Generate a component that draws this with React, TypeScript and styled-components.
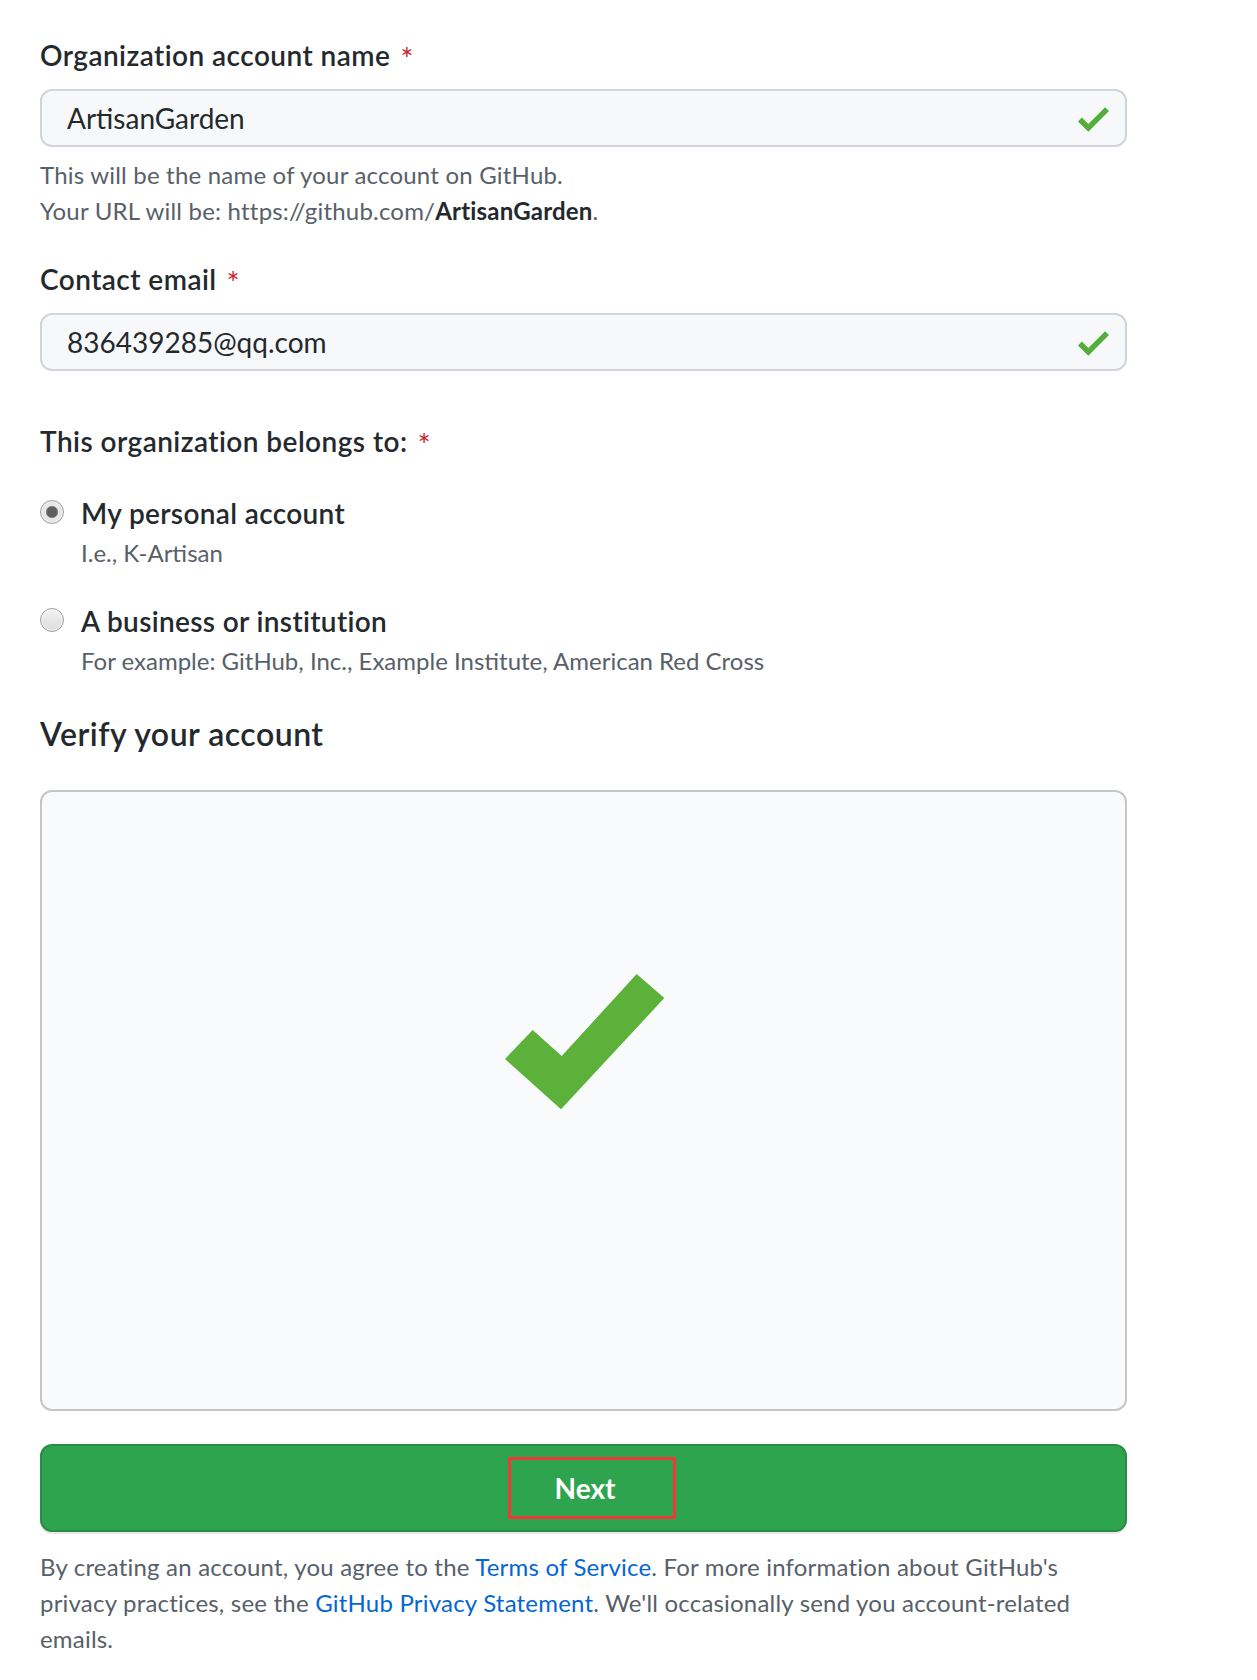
import React from "react";
import styled, { createGlobalStyle } from "styled-components";

const GlobalStyle = createGlobalStyle`
  html, body { margin: 0; padding: 0; background: #ffffff; }
  body {
    font-family: Lato, "Noto Sans", "Liberation Sans", sans-serif;
    color: #24292e;
  }
  * { box-sizing: border-box; }
`;

const Page = styled.div`
  padding: 37px 0 40px 40px;
`;

const Form = styled.form`
  width: 1087px;
  display: flex;
  flex-direction: column;
`;

const Field = styled.div<{ $gap?: number }>`
  display: flex;
  flex-direction: column;
  margin-top: ${(p) => p.$gap ?? 0}px;
`;

const Label = styled.label`
  font-size: 28px;
  line-height: 36px;
  height: 36px;
  font-weight: 600;
  letter-spacing: 0.45px;
  color: #24292e;
  display: block;
`;

const Required = styled.span`
  color: #cb2431;
  font-weight: 400;
  font-size: 31px;
  line-height: 0;
  margin-left: 10px;
  vertical-align: -4px;
`;

const InputShell = styled.div`
  margin-top: 16px;
  height: 58px;
  display: flex;
  align-items: center;
  border: 2px solid #d1d5da;
  border-radius: 12px;
  background: #f6f8fa;
  padding: 0 16px 0 25px;
`;

const TextInput = styled.input`
  flex: 1;
  min-width: 0;
  height: 100%;
  border: none;
  outline: none;
  background: transparent;
  padding: 0;
  font-family: inherit;
  font-size: 28px;
  color: #24292e;
`;

const SmallCheck = styled.svg`
  width: 31px;
  height: 25px;
  flex: none;
  margin-top: 2px;
`;

const Note = styled.p`
  margin: 10px 0 0;
  font-size: 24px;
  line-height: 36px;
  letter-spacing: 0.2px;
  color: #586069;
`;

const Strong = styled.strong`
  color: #24292e;
  font-weight: 700;
`;

const OptionList = styled.div`
  display: flex;
  flex-direction: column;
  gap: 32px;
  margin-top: 36px;
`;

const Option = styled.label`
  display: grid;
  grid-template-columns: 24px 1fr;
  column-gap: 17px;
  align-items: start;
  cursor: pointer;
`;

const Radio = styled.input.attrs({ type: "radio" })`
  appearance: none;
  -webkit-appearance: none;
  margin: 5px 0 0;
  width: 24px;
  height: 24px;
  border-radius: 50%;
  border: 1px solid #9c9c9c;
  background: linear-gradient(#f2f2f2, #dcdcdc);
  box-shadow: inset 0 0 0 1px rgba(255, 255, 255, 0.6);
  &:checked {
    background: radial-gradient(circle, #5f5f5f 0 5px, #8a8a8a 5.6px, #e9e9e9 6.6px, #dadada 100%);
  }
`;

const OptionText = styled.div`
  display: flex;
  flex-direction: column;
`;

const OptionTitle = styled.span`
  font-size: 28px;
  line-height: 36px;
  font-weight: 600;
  letter-spacing: 0.35px;
  color: #24292e;
`;

const OptionNote = styled.span`
  margin-top: 4px;
  font-size: 24px;
  line-height: 36px;
  color: #586069;
`;

const Heading = styled.h2`
  margin: 35px 0 0;
  font-size: 32px;
  line-height: 40px;
  font-weight: 600;
  letter-spacing: 0.5px;
  color: #24292e;
`;

const VerifyBox = styled.div`
  margin-top: 36px;
  height: 621px;
  border: 2px solid #c6c6c6;
  border-radius: 12px;
  background: #f9fafb;
  display: flex;
  flex-direction: column;
  align-items: center;
  padding-top: 182px;
`;

const BigCheck = styled.svg`
  width: 160px;
  height: 136px;
  margin-left: 2px;
`;

const SubmitButton = styled.button`
  margin-top: 33px;
  height: 88px;
  width: 100%;
  border: 2px solid #2a8c45;
  border-radius: 12px;
  background: #2ea44f;
  box-shadow: 0 2px 0 rgba(27, 31, 35, 0.1);
  display: flex;
  align-items: center;
  justify-content: center;
  cursor: pointer;
  font-family: inherit;
`;

const ButtonLabel = styled.span`
  border: 3px solid #f03a3a;
  height: 62px;
  padding: 0 58px 0 44px;
  margin-left: 17px;
  display: flex;
  align-items: center;
  font-size: 28px;
  font-weight: 700;
  color: #ffffff;
`;

const Footer = styled.p`
  margin: 17px 0 0;
  font-size: 24px;
  line-height: 36px;
  letter-spacing: 0.2px;
  color: #586069;
`;

const Link = styled.a`
  color: #0366d6;
  text-decoration: none;
`;

function CheckMark() {
  return (
    <SmallCheck viewBox="0 3.5 12 9.5" aria-hidden="true">
      <path fill="#52ae38" d="M12 5l-8 8-4-4 1.5-1.5L4 10l6.5-6.5L12 5z" />
    </SmallCheck>
  );
}

function TextField({ label, value, gap }: { label: string; value: string; gap?: number }) {
  return (
    <Field $gap={gap}>
      <Label>
        {label}
        <Required>*</Required>
      </Label>
      <InputShell>
        <TextInput defaultValue={value} />
        <CheckMark />
      </InputShell>
    </Field>
  );
}

export default function App() {
  return (
    <>
      <GlobalStyle />
      <Page>
        <Form onSubmit={(e) => e.preventDefault()}>
          <TextField label="Organization account name" value="ArtisanGarden" />
          <Note>
            This will be the name of your account on GitHub.
            <br />
            Your URL will be: https://github.com/<Strong>ArtisanGarden</Strong>.
          </Note>

          <TextField label="Contact email" value="836439285@qq.com" gap={32} />

          <Field $gap={52}>
            <Label as="div">
              This organization belongs to:
              <Required>*</Required>
            </Label>
            <OptionList>
              <Option>
                <Radio name="owner" defaultChecked />
                <OptionText>
                  <OptionTitle>My personal account</OptionTitle>
                  <OptionNote>I.e., K-Artisan</OptionNote>
                </OptionText>
              </Option>
              <Option>
                <Radio name="owner" />
                <OptionText>
                  <OptionTitle>A business or institution</OptionTitle>
                  <OptionNote>For example: GitHub, Inc., Example Institute, American Red Cross</OptionNote>
                </OptionText>
              </Option>
            </OptionList>
          </Field>

          <Heading>Verify your account</Heading>
          <VerifyBox>
            <BigCheck viewBox="0 0 160 136" aria-hidden="true">
              <polygon
                fill="#5bb13a"
                points="0,85 27.7,56 56.7,82 131.7,0 159.3,24 56,135.3"
              />
            </BigCheck>
          </VerifyBox>

          <SubmitButton type="submit">
            <ButtonLabel>Next</ButtonLabel>
          </SubmitButton>

          <Footer>
            By creating an account, you agree to the <Link href="#">Terms of Service</Link>. For more
            information about GitHub's privacy practices, see the{" "}
            <Link href="#">GitHub Privacy Statement</Link>. We'll occasionally send you
            account-related emails.
          </Footer>
        </Form>
      </Page>
    </>
  );
}
